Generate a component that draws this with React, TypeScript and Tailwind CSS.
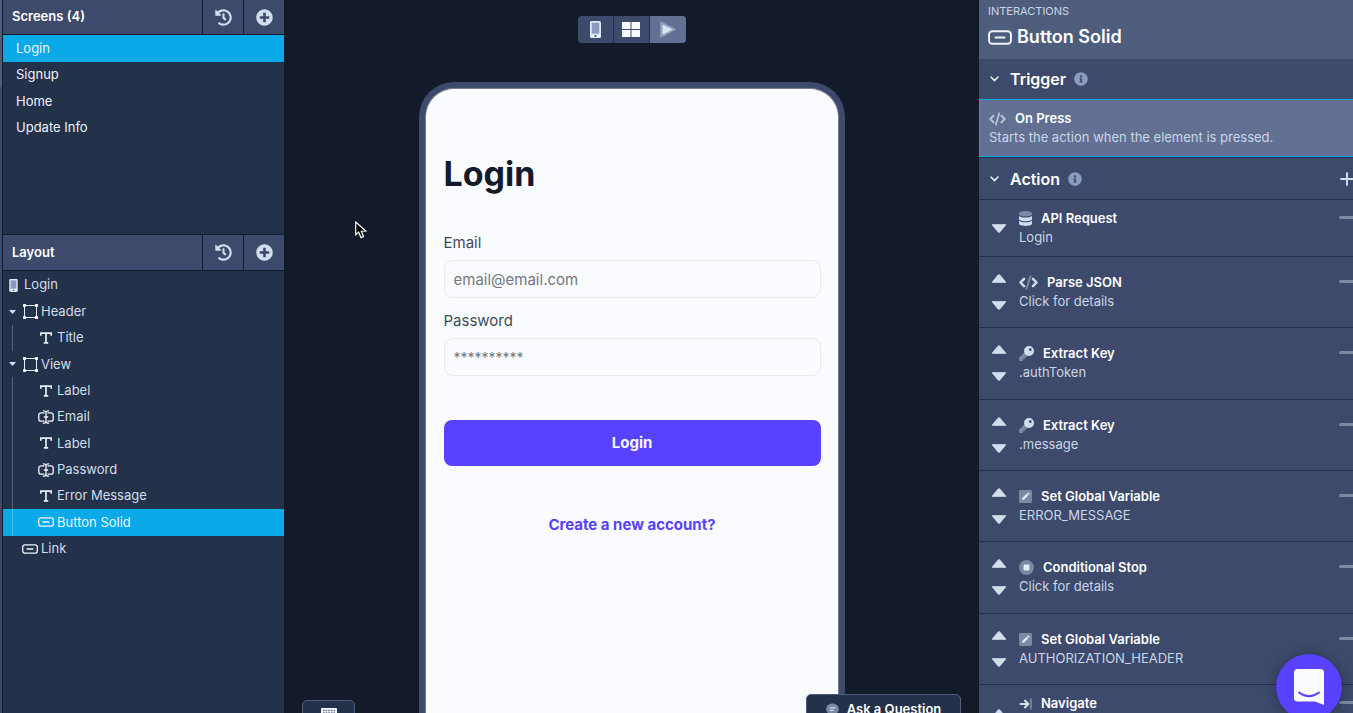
import type { ReactNode } from "react";
import { FaHistory, FaPlusCircle, FaInfoCircle } from "react-icons/fa";

function PhoneIcon({ className }: { className: string }) {
  return (
    <svg viewBox="0 0 11 17" className={className} aria-hidden="true">
      <rect width="11" height="17" rx="1.5" fill="#e3ebf6" />
      <rect x="1.7" y="1.7" width="7.6" height="11" fill="#8b9bc0" />
      <rect x="4.5" y="14" width="2" height="1.8" rx="0.6" fill="#3d4a6b" />
    </svg>
  );
}

function BoxIcon() {
  return (
    <svg viewBox="0 0 15 15" className="h-[15px] w-[15px]" aria-hidden="true">
      <rect x="1.5" y="1.5" width="12" height="12" fill="none" stroke="#e8eef7" />
      <g fill="#ffffff">
        <rect width="3" height="3" rx="0.8" />
        <rect x="12" width="3" height="3" rx="0.8" />
        <rect y="12" width="3" height="3" rx="0.8" />
        <rect x="12" y="12" width="3" height="3" rx="0.8" />
      </g>
    </svg>
  );
}

function TextIcon() {
  return (
    <svg viewBox="0 0 12 12" className="h-3 w-3" aria-hidden="true">
      <path d="M0.8 3.8V1.2H11.2V3.8M6 1.2V10.8M3.8 10.8H8.2" fill="none" stroke="#e8eef7" strokeWidth="1.7" />
    </svg>
  );
}

function InputIcon() {
  return (
    <svg viewBox="0 0 16 14" className="h-3.5 w-4" aria-hidden="true">
      <g fill="none" stroke="#f1f5fb" strokeWidth="1.3" strokeLinecap="round">
        <path d="M6 2.9H3A2.2 2.2 0 0 0 0.8 5.1V8.9A2.2 2.2 0 0 0 3 11.1H6M10 2.9H13A2.2 2.2 0 0 1 15.2 5.1V8.9A2.2 2.2 0 0 1 13 11.1H10" />
        <path d="M5.4 0.8Q8 0.8 8 2.8Q8 0.8 10.6 0.8M8 2.4V11.6M5.4 13.2Q8 13.2 8 11.2Q8 13.2 10.6 13.2M6.3 7H9.7" />
      </g>
    </svg>
  );
}

function ButtonIcon({ className }: { className: string }) {
  return (
    <svg viewBox="0 0 16 10" className={className} aria-hidden="true">
      <rect x="0.7" y="0.8" width="14.6" height="8.4" rx="2.2" fill="none" stroke="#f1f5fb" strokeWidth="1.3" />
      <path d="M5 5H11" stroke="#f1f5fb" strokeWidth="1.3" strokeLinecap="round" />
    </svg>
  );
}

function CodeIcon({ className, dim }: { className: string; dim?: boolean }) {
  return (
    <svg viewBox="0 0 19 15" className={className} aria-hidden="true">
      <g fill="none" strokeLinecap="round" strokeLinejoin="round">
        <path d="M5 3.8L1.5 7.5L5 11.2M14 3.8L17.5 7.5L14 11.2" stroke={dim ? "#b3bfd6" : "#d3deec"} strokeWidth="2.5" />
        <path d="M11.4 1.2L7.6 13.8" stroke={dim ? "#b3bfd6" : "#7d89a3"} strokeWidth="2" />
      </g>
    </svg>
  );
}

function DatabaseIcon() {
  return (
    <svg viewBox="0 0 13 15" className="h-[15px] w-[13px]" aria-hidden="true">
      <path d="M0 2.4C0 1 2.6 0 6.5 0S13 1 13 2.4V3.3C13 4.6 10.4 5.4 6.5 5.4S0 4.6 0 3.3Z" fill="#7d89a3" />
      <path d="M0 5C1.4 6.1 3.8 6.6 6.5 6.6S11.6 6.1 13 5V8C13 9.3 10.4 10.2 6.5 10.2S0 9.3 0 8Z" fill="#d3deec" />
      <path d="M0 9.7C1.4 10.8 3.8 11.3 6.5 11.3S11.6 10.8 13 9.7V12.6C13 14 10.4 15 6.5 15S0 14 0 12.6Z" fill="#d3deec" />
    </svg>
  );
}

function KeyIcon() {
  return (
    <svg viewBox="0 0 15 15" className="h-[15px] w-[15px]" aria-hidden="true">
      <path d="M5.2 6.6L0.4 11.4L0 12V14.3L0.7 15H3.6L4.3 14.3V13H5.6L6.3 12.3V11H7.4L9.2 9.6Z" fill="#7d89a3" />
      <path d="M10 0A5 5 0 1 1 10 10A5 5 0 0 1 10 0ZM11.3 2.3A1.4 1.4 0 1 0 11.3 5.1A1.4 1.4 0 0 0 11.3 2.3Z" fill="#d3deec" fillRule="evenodd" />
    </svg>
  );
}

function PenIcon() {
  return (
    <svg viewBox="0 0 13 13" className="h-[13px] w-[13px]" aria-hidden="true">
      <rect width="13" height="13" rx="1.4" fill="#7d89a3" />
      <path d="M3 10L3.4 7.9L7.5 3.8L9.2 5.5L5.1 9.6ZM8 3.3L8.6 2.7Q9.2 2.3 9.8 2.9L10.1 3.2Q10.7 3.8 10.3 4.4L9.7 5Z" fill="#e3ebf6" />
    </svg>
  );
}

function StopIcon() {
  return (
    <svg viewBox="0 0 15 15" className="h-[15px] w-[15px]" aria-hidden="true">
      <circle cx="7.5" cy="7.5" r="7.5" fill="#7d89a3" />
      <rect x="4.6" y="4.6" width="5.8" height="5.8" rx="0.6" fill="#e3ebf6" />
    </svg>
  );
}

function NavigateIcon() {
  return (
    <svg viewBox="0 0 13 12" className="h-3 w-[13px]" aria-hidden="true">
      <path d="M0.8 6H8.6M5.4 2L9.4 6L5.4 10" fill="none" stroke="#d3deec" strokeWidth="2" strokeLinejoin="round" />
      <rect x="11.2" y="0.5" width="1.6" height="11" fill="#7d89a3" />
    </svg>
  );
}

function PanelHeader({ title, className }: { title: string; className: string }) {
  return (
    <div className={`flex shrink-0 border-b border-[#141b2b] bg-[#3d4a6b] ${className}`}>
      <h2 className="flex flex-1 items-center pl-[9px] text-[13px] font-semibold text-white">{title}</h2>
      <button type="button" aria-label={`${title} history`} className="flex w-[41px] items-center justify-center border-l border-[#141b2b] text-[#d3deec]">
        <FaHistory size={17} />
      </button>
      <button type="button" aria-label={`Add to ${title}`} className="flex w-[41px] items-center justify-center border-l border-[#141b2b] text-[#d3deec]">
        <FaPlusCircle size={17} />
      </button>
    </div>
  );
}

const screens = ["Login", "Signup", "Home", "Update Info"];

type NodeKind = "box" | "text" | "input" | "button";
const nodes: { name: string; kind: NodeKind; child?: boolean; selected?: boolean }[] = [
  { name: "Header", kind: "box" },
  { name: "Title", kind: "text", child: true },
  { name: "View", kind: "box" },
  { name: "Label", kind: "text", child: true },
  { name: "Email", kind: "input", child: true },
  { name: "Label", kind: "text", child: true },
  { name: "Password", kind: "input", child: true },
  { name: "Error Message", kind: "text", child: true },
  { name: "Button Solid", kind: "button", child: true, selected: true },
  { name: "Link", kind: "button" },
];

const nodeIcons: Record<NodeKind, ReactNode> = {
  box: <BoxIcon />,
  text: <TextIcon />,
  input: <InputIcon />,
  button: <ButtonIcon className="h-2.5 w-4" />,
};

function TreeRow({ name, kind, child, selected }: (typeof nodes)[number]) {
  return (
    <li className={`flex ${selected ? "bg-[#0aa9e8] text-[#e8f4fc]" : "text-[#d3deec]"}`}>
      <span className={`ml-[9px] flex w-2.5 shrink-0 items-center ${child ? "border-l border-white/25" : ""}`}>
        {kind === "box" && (
          <svg viewBox="0 0 7 4" className="-ml-[3px] h-1 w-[7px]" aria-hidden="true">
            <path d="M0 0H7L3.5 4Z" fill="#d3deec" />
          </svg>
        )}
      </span>
      <button type="button" className={`flex flex-1 items-center gap-[3px] text-left ${child ? "pl-4" : ""}`}>
        <span className="flex w-4 justify-center">{nodeIcons[kind]}</span>
        {name}
      </button>
    </li>
  );
}

function LeftPanel() {
  return (
    <aside className="flex w-[284px] shrink-0 bg-[#24314a]">
      <div className="w-0.5 bg-[#3d4a6b]">
        <div className="h-[87px] bg-[#4f5d7d]" />
      </div>
      <div className="flex flex-1 flex-col border-l border-[#141b2b] text-[13px]">
        <section className="flex h-[235px] shrink-0 flex-col border-b border-[#141b2b]">
          <PanelHeader title="Screens (4)" className="h-[35px]" />
          <ul className="grid h-[106px] auto-rows-fr">
            {screens.map((s, i) => (
              <li key={s} className={`flex ${i === 0 ? "bg-[#0aa9e8] text-[#e8f4fc]" : "text-[#eef2f8]"}`}>
                <button type="button" className="flex-1 pl-[13px] text-left">{s}</button>
              </li>
            ))}
          </ul>
        </section>
        <section className="flex flex-col">
          <PanelHeader title="Layout" className="h-9" />
          <ul className="mt-px grid h-[290px] auto-rows-fr">
            <li className="flex text-[#d3deec]">
              <button type="button" className="flex flex-1 items-center gap-1.5 pl-1.5 text-left">
                <PhoneIcon className="h-[13px] w-[9px]" />
                Login
              </button>
            </li>
            {nodes.map((n, i) => (
              <TreeRow key={i} {...n} />
            ))}
          </ul>
        </section>
      </div>
    </aside>
  );
}

function Canvas() {
  return (
    <main className="relative flex min-w-0 flex-1 flex-col items-center overflow-hidden bg-[#131a29] pt-4">
      <div className="flex h-[27px] shrink-0 divide-x divide-[#24314a] overflow-hidden rounded-[4px] bg-[#3d4a6b]">
        <button type="button" aria-label="Phone preview" className="flex w-9 items-center justify-center">
          <PhoneIcon className="h-[17px] w-[11px]" />
        </button>
        <button type="button" aria-label="Grid view" className="flex w-9 items-center justify-center">
          <svg viewBox="0 0 18 15" className="h-[15px] w-[18px]" fill="#fafbfd" aria-hidden="true">
            <rect width="8.5" height="7" />
            <rect x="9.5" width="8.5" height="7" />
            <rect y="8" width="8.5" height="7" />
            <rect x="9.5" y="8" width="8.5" height="7" />
          </svg>
        </button>
        <button type="button" aria-label="Play" className="flex w-9 items-center justify-center bg-[#617093]">
          <svg viewBox="0 0 16 17" className="h-[17px] w-4" aria-hidden="true">
            <path d="M0.8 0.8L15.5 8.5L0.8 16.2Z" fill="#95a3c1" stroke="#95a3c1" strokeLinejoin="round" />
            <path d="M3 4.2L11.5 8.5L3 13Z" fill="#d9e3f0" stroke="#d9e3f0" strokeLinejoin="round" />
          </svg>
        </button>
      </div>

      <div className="mt-[39px] flex w-[426px] flex-1 shrink-0 rounded-t-[35px] bg-[#3d4a6b] px-1.5 pt-1.5">
        <form className="flex flex-1 flex-col rounded-t-[29px] border-x border-t border-[#7a8091] bg-[#fafbfe] pt-[63px] pr-[17px] pl-[18px] text-[15px] text-[#424a5a]">
          <h1 className="text-[34px] leading-[44px] font-bold text-[#121a2c]">Login</h1>
          <label htmlFor="email" className="mt-[37px] leading-5">Email</label>
          <input id="email" type="email" placeholder="email@email.com" className="mt-[7px] h-[38px] rounded-[9px] border border-[#e8eaee] bg-transparent px-[9px] placeholder:text-[#757880]" />
          <label htmlFor="password" className="mt-[13px] leading-5">Password</label>
          <input id="password" type="password" placeholder="**********" className="mt-[7px] h-[38px] rounded-[9px] border border-[#e8eaee] bg-transparent px-[9px] text-sm placeholder:text-[#757880]" />
          <button type="button" className="mt-11 h-[46px] rounded-lg bg-[#5842ff] font-bold text-[#f5f5ff]">Login</button>
          <a href="#signup" className="mt-[49px] self-center leading-5 font-bold text-[#5842ff]">Create a new account?</a>
        </form>
      </div>

      <svg viewBox="0 0 12 18" className="absolute top-[221px] left-[71px] h-[18px] w-3" aria-hidden="true">
        <path d="M0.7 1V13.6L3.6 11L6 16.6L8.6 15.4L6.3 10.2L10.8 10Z" fill="#000000" stroke="#ffffff" strokeWidth="1.2" />
      </svg>
      <button type="button" aria-label="Keyboard" className="absolute -bottom-4 left-[18px] flex h-[29px] w-[53px] justify-center rounded-[5px] border border-[#4f5d7d] bg-[#24314a] pt-[7px]">
        <svg viewBox="0 0 16 10" className="h-2.5 w-4" aria-hidden="true">
          <rect width="16" height="10" rx="0.8" fill="#f5f8fc" />
          <path d="M2 2.5H14M2 5H14M3 7.5H13" stroke="#6b7894" strokeWidth="1.3" strokeDasharray="1.8 0.8" />
        </svg>
      </button>
      <button type="button" className="absolute right-[18px] -bottom-3 flex h-[31px] w-[155px] items-center justify-center gap-2 rounded-[5px] border border-[#4f5d7d] bg-[#24314a] text-[13px] font-semibold text-white">
        <svg viewBox="0 0 13 13" className="h-[13px] w-[13px]" aria-hidden="true">
          <path d="M6.5 0.5C10 0.5 12.8 2.8 12.8 6S10 11.6 6.5 11.6L3 12.8L3.4 10.9C1.4 9.9 0.2 8.2 0.2 6C0.2 2.8 3 0.5 6.5 0.5Z" fill="#7d89a3" />
          <path d="M3.6 4.9H9.4M3.6 7.3H7.6" stroke="#e3ebf6" />
        </svg>
        Ask a Question
      </button>
    </main>
  );
}

function SectionTitle({ title }: { title: string }) {
  return (
    <h3 className="flex flex-1 items-center text-base font-semibold text-white">
      <svg viewBox="0 0 9 6" className="mr-[11px] h-1.5 w-[9px]" aria-hidden="true">
        <path d="M1 1L4.5 4.6L8 1" fill="none" stroke="#e8eef7" strokeWidth="1.5" strokeLinecap="round" />
      </svg>
      {title}
      <FaInfoCircle size={14} className="ml-2 text-[#8b9bc0]" />
    </h3>
  );
}

function Arrow({ down }: { down?: boolean }) {
  return (
    <button type="button" aria-label={down ? "Move down" : "Move up"} className="block">
      <svg viewBox="0 0 16 9" className="block h-[9px] w-4" aria-hidden="true">
        <path
          d={down ? "M1.2 0.7H14.8L9 7.8Q8 8.8 7 7.8Z" : "M1.2 8.3H14.8L9 1.2Q8 0.2 7 1.2Z"}
          fill="#d3deec"
          stroke="#d3deec"
          strokeLinejoin="round"
        />
      </svg>
    </button>
  );
}

type ActionItem = { title: string; detail?: string; icon: ReactNode; up?: boolean; down?: boolean };
const firstAction: ActionItem = { title: "API Request", detail: "Login", icon: <DatabaseIcon />, down: true };
const lastAction: ActionItem = { title: "Navigate", icon: <NavigateIcon />, up: true };
const actions: ActionItem[] = [
  { title: "Parse JSON", detail: "Click for details", icon: <CodeIcon className="h-[15px] w-[19px]" /> },
  { title: "Extract Key", detail: ".authToken", icon: <KeyIcon /> },
  { title: "Extract Key", detail: ".message", icon: <KeyIcon /> },
  { title: "Set Global Variable", detail: "ERROR_MESSAGE", icon: <PenIcon /> },
  { title: "Conditional Stop", detail: "Click for details", icon: <StopIcon /> },
  { title: "Set Global Variable", detail: "AUTHORIZATION_HEADER", icon: <PenIcon /> },
].map((a) => ({ ...a, up: true, down: true }));

function ActionRow({ title, detail, icon, up, down }: ActionItem) {
  return (
    <li className="flex items-center border-b border-[#24314a] py-[9px] pl-3">
      <div className="flex w-4 flex-col gap-[18px]">
        {up && <Arrow />}
        {down && <Arrow down />}
      </div>
      <div className="ml-3 flex-1">
        <div className="flex items-start">
          <h4 className="flex flex-1 items-center gap-[9px] text-[13px] leading-[19px] font-semibold text-white">
            {icon}
            {title}
          </h4>
          <button type="button" aria-label={`Remove ${title}`} className="mt-[7px] h-[3px] w-3.5 rounded-l-sm bg-[#7d89a3]" />
        </div>
        <p className="min-h-[19px] text-[13px] leading-[19px] text-[#cbd6e6]">{detail}</p>
      </div>
    </li>
  );
}

function RightPanel() {
  return (
    <aside className="flex w-[374px] shrink-0 flex-col overflow-hidden bg-[#3d4a6b]">
      <header className="h-[59px] shrink-0 bg-[#4f5d7d] pt-[3px] pl-[9px]">
        <p className="text-[11px] leading-4 text-[#cbd6e6]">INTERACTIONS</p>
        <h2 className="mt-[5px] flex items-center gap-[5px] text-lg leading-[26px] font-semibold text-white">
          <ButtonIcon className="h-[15px] w-6" />
          Button Solid
        </h2>
      </header>
      <div className="flex h-10 shrink-0 pl-[11px]">
        <SectionTitle title="Trigger" />
      </div>
      <button type="button" className="h-[58px] shrink-0 border border-r-0 border-[#0aa9e8] bg-[#617093] pl-[9px] text-left text-[13px] leading-[19px]">
        <span className="flex items-center gap-[9px] font-semibold text-white">
          <CodeIcon dim className="h-3.5 w-[17px]" />
          On Press
        </span>
        <span className="block text-[#cbd6e6]">Starts the action when the element is pressed.</span>
      </button>
      <div className="flex h-[43px] shrink-0 border-y border-[#24314a] pl-[11px]">
        <SectionTitle title="Action" />
        <button type="button" aria-label="Add action" className="flex items-center">
          <svg viewBox="0 0 13 14" className="h-3.5 w-[13px]" aria-hidden="true">
            <path d="M1 7H13M7 1V13" stroke="#d3deec" strokeWidth="1.9" strokeLinecap="round" />
          </svg>
        </button>
      </div>
      <ul className="shrink-0">
        <ActionRow {...firstAction} />
      </ul>
      <ul className="grid h-[428px] shrink-0 auto-rows-fr">
        {actions.map((a, i) => (
          <ActionRow key={i} {...a} />
        ))}
      </ul>
      <ul className="shrink-0">
        <ActionRow {...lastAction} />
      </ul>
    </aside>
  );
}

export default function App() {
  return (
    <div className="relative flex h-screen overflow-hidden bg-[#131a29] font-[Inter,sans-serif]">
      <LeftPanel />
      <Canvas />
      <RightPanel />
      <button type="button" aria-label="Open chat" className="absolute right-[11px] -bottom-[7px] flex h-[66px] w-[66px] items-center justify-center rounded-full bg-[#5842ff] shadow-[0_1px_12px_rgba(20,27,43,0.5)]">
        <svg viewBox="0 0 30 36" className="h-9 w-[30px]" aria-hidden="true">
          <path d="M3.5 0H26.5Q30 0 30 3.5V36L21 32.5H3.5Q0 32.5 0 29V3.5Q0 0 3.5 0Z" fill="#fafbfe" />
          <path d="M5 23.4Q15 31 25 23.4" fill="none" stroke="#5842ff" strokeWidth="1.9" strokeLinecap="round" />
        </svg>
      </button>
    </div>
  );
}
